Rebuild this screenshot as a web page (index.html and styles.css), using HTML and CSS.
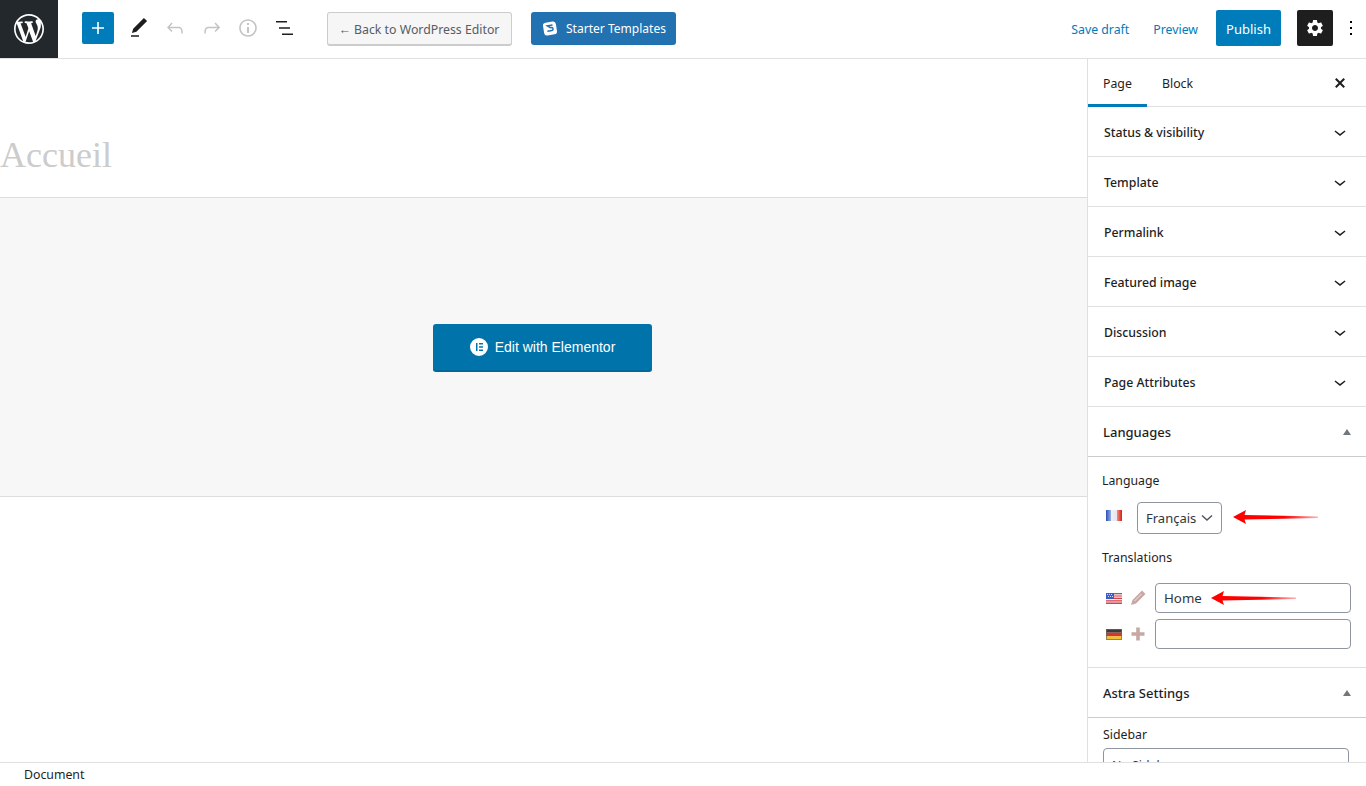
FILE: index.html
```html
<!DOCTYPE html>
<html lang="en">
<head>
<meta charset="utf-8">
<title>Accueil</title>
<link rel="stylesheet" href="styles.css">
</head>
<body>
<div class="app">
  <header class="topbar">
    <a class="wp-logo"><svg viewBox="0 0 20 20" width="30" height="30"><path fill="#fff" d="M20 10c0-5.510-4.490-10-10-10C4.480 0 0 4.490 0 10c0 5.520 4.480 10 10 10 5.510 0 10-4.480 10-10zM7.780 15.370L4.370 6.220c.55-.02 1.170-.08 1.170-.08.5-.06.44-1.130-.06-1.110 0 0-1.450.11-2.370.11-.18 0-.37 0-.58-.01C4.120 2.690 6.870 1.110 10 1.110c2.330 0 4.450.87 6.050 2.340-.68-.11-1.650.39-1.650 1.580 0 .74.45 1.360.9 2.100.35.61.55 1.360.55 2.460 0 1.490-1.400 5-1.400 5l-3.030-8.370c.54-.02.82-.17.82-.17.5-.05.44-1.250-.06-1.220 0 0-1.440.12-2.380.12-.87 0-2.330-.12-2.330-.12-.5-.03-.56 1.200-.06 1.220l.92.08 1.260 3.410zM17.410 10c.24-.64.74-1.870.43-4.250.7 1.290 1.050 2.710 1.050 4.250 0 3.290-1.730 6.240-4.400 7.780.97-2.590 1.940-5.200 2.920-7.780zM6.100 18.090C3.120 16.650 1.110 13.530 1.110 10c0-1.300.23-2.480.72-3.590C3.250 10.300 4.670 14.200 6.100 18.090zm4.030-6.630l2.580 6.980c-.86.29-1.760.45-2.710.45-.79 0-1.570-.11-2.290-.33.81-2.380 1.620-4.740 2.420-7.100z"/></svg></a>
    <div class="tools">
      <button class="add"><svg viewBox="0 0 24 24" width="24" height="24"><path fill="#fff" d="M18 11.200h-5.200V6h-1.600v5.200H6v1.600h5.200V18h1.600v-5.200H18z"/></svg></button>
      <span class="tool dark"><svg viewBox="0 0 24 24" width="24" height="24"><path d="M20.100 5.100L16.900 2 6.200 12.700l-1.300 4.400 4.500-1.300L20.100 5.100zM4 20.800h8v-1.500H4v1.500z"/></svg></span>
      <span class="tool muted"><svg viewBox="0 0 24 24" width="24" height="24"><path d="M18.300 11.700c-.6-.6-1.400-.9-2.300-.9H6.700l2.900-3.300-1.100-1-4.500 5L8.500 16l1-1-2.700-2.700H16c.5 0 .9.2 1.300.5 1 1 1 3.400 1 4.500v.3h1.500v-.2c0-1.500 0-4.300-1.500-5.700z"/></svg></span>
      <span class="tool muted"><svg viewBox="0 0 24 24" width="24" height="24"><path d="M15.600 6.500l-1.100 1 2.900 3.300H8c-.9 0-1.700.3-2.300.9-1.400 1.500-1.400 4.200-1.400 5.600v.2h1.500v-.3c0-1.100 0-3.500 1-4.500.3-.3.7-.5 1.300-.5h9.200L14.500 15l1.100 1.100 4.600-4.600-4.600-5z"/></svg></span>
      <span class="tool muted"><svg viewBox="0 0 24 24" width="24" height="24"><path d="M12 3.200c-4.800 0-8.800 3.900-8.800 8.800 0 4.800 3.900 8.800 8.800 8.800 4.800 0 8.800-3.900 8.800-8.800 0-4.800-4-8.800-8.800-8.800zm0 16c-4 0-7.200-3.300-7.200-7.200C4.800 8 8 4.800 12 4.800s7.200 3.300 7.200 7.200c0 4-3.200 7.200-7.200 7.200zM11 17h2v-6h-2v6zm0-8h2V7h-2v2z"/></svg></span>
      <span class="tool dark"><svg viewBox="0 0 24 24" width="24" height="24"><path d="M3 5h11v1.500H3zM6 11.200h11v1.500H6zM9 17.400h11v1.500H9z"/></svg></span>
    </div>
    <a class="back-btn">← Back to WordPress Editor</a>
    <a class="starter-btn"><svg viewBox="0 0 16 17" width="16" height="17"><rect x="1.500" y="2" width="13" height="13" rx="3" fill="#fff" transform="rotate(-9 8 8.500)"/><path d="M11 5.500H5.800l2.800 2.300H10c1.300 0 1.300 3-.4 3H5" fill="none" stroke="#2271b1" stroke-width="1.500" transform="rotate(-9 8 8.500)"/></svg>Starter Templates</a>
    <div class="actions">
      <a class="link save">Save draft</a>
      <a class="link preview">Preview</a>
      <button class="publish">Publish</button>
      <button class="settings"><svg viewBox="0 0 20 20" width="20" height="20"><path fill="#fff" d="M15.950 10.780c.03-.25.05-.51.05-.78s-.02-.53-.06-.78l1.690-1.320c.15-.12.19-.34.1-.51l-1.600-2.770c-.1-.18-.31-.24-.49-.18l-1.990.8c-.42-.32-.86-.58-1.350-.78L12 2.340c-.03-.2-.2-.34-.4-.34H8.400c-.2 0-.36.14-.39.34l-.3 2.120c-.49.2-.94.47-1.350.78l-1.990-.8c-.18-.07-.39 0-.49.18l-1.600 2.770c-.1.18-.06.39.1.51l1.690 1.320c-.04.25-.07.52-.07.78s.02.53.06.78L2.370 12.100c-.15.12-.19.34-.1.51l1.600 2.770c.1.18.31.24.49.18l1.990-.8c.42.32.86.58 1.350.78l.3 2.120c.04.2.2.34.4.34h3.200c.2 0 .37-.14.39-.34l.3-2.120c.49-.2.94-.47 1.350-.78l1.990.8c.18.07.39 0 .49-.18l1.600-2.770c.1-.18.06-.39-.1-.51l-1.670-1.320zM10 13c-1.650 0-3-1.350-3-3s1.350-3 3-3 3 1.350 3 3-1.350 3-3 3z"/></svg></button>
      <span class="more"><svg viewBox="0 0 24 24" width="24" height="24"><path d="M13 19h-2v-2h2v2zm0-6h-2v-2h2v2zm0-6h-2V5h2v2z"/></svg></span>
    </div>
  </header>

  <div class="body">
    <main class="editor">
      <h1 class="title">Accueil</h1>
      <div class="builder">
        <a class="elementor-btn"><svg viewBox="0 0 18 18" width="18" height="18"><path fill="#fff" fill-rule="evenodd" d="M9 0a9 9 0 1 0 0 18A9 9 0 0 0 9 0zM6 5h1.500v8H6zm3 0h4v1.500H9zm0 3.250h4v1.500H9zm0 3.250h4V13H9z"/></svg>Edit with Elementor</a>
      </div>
    </main>

    <aside class="sidebar">
      <div class="tabs">
        <span class="tab active">Page</span>
        <span class="tab">Block</span>
        <svg class="close" viewBox="0 0 20 20" width="20" height="20"><path d="M14.950 6.460L11.410 10l3.540 3.540-1.410 1.410L10 11.420l-3.530 3.530-1.420-1.420L8.580 10 5.050 6.470l1.420-1.420L10 8.580l3.540-3.530z"/></svg>
      </div>
      <div class="row"><span class="row-label">Status &amp; visibility</span><svg class="chev" viewBox="0 0 24 24" width="24" height="24"><path d="M17.500 11.600L12 16l-5.500-4.400.9-1.200L12 14l4.600-3.600z"/></svg></div>
      <div class="row"><span class="row-label">Template</span><svg class="chev" viewBox="0 0 24 24" width="24" height="24"><path d="M17.500 11.600L12 16l-5.500-4.400.9-1.200L12 14l4.600-3.600z"/></svg></div>
      <div class="row"><span class="row-label">Permalink</span><svg class="chev" viewBox="0 0 24 24" width="24" height="24"><path d="M17.500 11.600L12 16l-5.500-4.400.9-1.200L12 14l4.600-3.600z"/></svg></div>
      <div class="row"><span class="row-label">Featured image</span><svg class="chev" viewBox="0 0 24 24" width="24" height="24"><path d="M17.500 11.600L12 16l-5.500-4.400.9-1.200L12 14l4.600-3.600z"/></svg></div>
      <div class="row"><span class="row-label">Discussion</span><svg class="chev" viewBox="0 0 24 24" width="24" height="24"><path d="M17.500 11.600L12 16l-5.500-4.400.9-1.200L12 14l4.600-3.600z"/></svg></div>
      <div class="row"><span class="row-label">Page Attributes</span><svg class="chev" viewBox="0 0 24 24" width="24" height="24"><path d="M17.500 11.600L12 16l-5.500-4.400.9-1.200L12 14l4.600-3.600z"/></svg></div>

      <div class="meta-head">Languages<span class="tri"></span></div>
      <div class="lang">
        <div class="lbl">Language</div>
        <div class="lang-line">
          <svg class="flag flag-fr" viewBox="0 0 16 11" width="16" height="11"><defs><linearGradient id="fr"><stop offset="0" stop-color="#2a50b5"/><stop offset=".33" stop-color="#9fb4e8"/><stop offset=".34" stop-color="#eef1f8"/><stop offset=".66" stop-color="#e6e6ec"/><stop offset=".67" stop-color="#f2948a"/><stop offset="1" stop-color="#d81e12"/></linearGradient></defs><rect width="16" height="11" fill="url(#fr)"/></svg>
          <div class="select">Français<svg viewBox="0 0 12 8" width="12" height="8"><path d="M1 1.500l5 4.500 5-4.500" fill="none" stroke="#50575e" stroke-width="1.500"/></svg></div>
          <svg class="arrow arrow-a" viewBox="0 0 85 14" width="85" height="14"><defs><linearGradient id="ar"><stop offset=".6" stop-color="#f00"/><stop offset="1" stop-color="#f00" stop-opacity=".3"/></linearGradient></defs><path fill="url(#ar)" d="M0 7L13 0 11.500 5 85 6.500v1.500L11.500 9.500 13 14z"/></svg>
        </div>
        <div class="lbl trans">Translations</div>
        <div class="trans-line">
          <svg class="flag" viewBox="0 0 16 11" width="16" height="11"><rect width="16" height="11" fill="#f0ecec"/><path fill="#d8434a" d="M0 0h16v1.200H0zM0 2.400h16v1.200H0zM0 4.800h16V6H0zM0 7.200h16v1.200H0zM0 9.600h16V11H0z"/><rect width="8" height="6" fill="#3a5ed0"/><path fill="#cfdaf8" d="M1 1h1v1H1zM3 1h1v1H3zM5 1h1v1H5zM2 3h1v1H2zM4 3h1v1H4zM6 3h1v1H6z"/></svg>
          <svg class="act" viewBox="0 0 16 16" width="16" height="16"><path fill="#c8a8a4" d="M12 .5l3.500 3.500L6 13.500 1 15l1.500-5z"/><path d="M4.500 11l7-7" stroke="#fff" stroke-width=".7" fill="none"/></svg>
          <div class="field">Home</div>
          <svg class="arrow arrow-b" viewBox="0 0 85 14" width="85" height="14"><path fill="url(#ar)" d="M0 7L13 0 11.500 5 85 6.500v1.500L11.500 9.500 13 14z"/></svg>
        </div>
        <div class="trans-line">
          <svg class="flag" viewBox="0 0 16 11" width="16" height="11"><rect width="16" height="3.700" fill="#3a3a3a"/><rect y="3.700" width="16" height="3.700" fill="#d5352c"/><rect y="7.300" width="16" height="3.700" fill="#f2c22e"/><rect x=".5" y=".5" width="15" height="10" fill="none" stroke="#6b6b5e" stroke-opacity=".7"/></svg>
          <svg class="act" viewBox="0 0 16 16" width="16" height="16"><path fill="#c8a8a4" d="M6.200 1.500h3.600v4.700h4.700v3.600H9.800v4.700H6.200V9.800H1.500V6.200h4.700z"/></svg>
          <div class="field"></div>
        </div>
      </div>

      <div class="meta-head astra">Astra Settings<span class="tri"></span></div>
      <div class="astra-body">
        <div class="lbl">Sidebar</div>
        <div class="astra-select">No Sidebar</div>
      </div>
    </aside>
  </div>

  <footer class="footer">Document</footer>
</div>
</body>
</html>
```

FILE: styles.css
```css
* { box-sizing: border-box; }
html, body { margin: 0; height: 100%; overflow: hidden; }
body { font-family: "Noto Sans", sans-serif; font-size: 12.3px; color: #1e1e1e; background: #fff; }
.app { display: flex; flex-direction: column; height: 786px; }

.topbar { flex: 0 0 59px; display: flex; align-items: center; padding-bottom: 2px; border-bottom: 1px solid #e0e0e0; }
.wp-logo { width: 58px; height: 58px; margin-bottom: -2px; align-self: flex-start; background: #23282d; display: flex; align-items: center; justify-content: center; }
.tools { display: flex; align-items: center; margin-left: 24px; }
.add { width: 32px; height: 32px; padding: 0; border: 0; border-radius: 2px; background: #007cba; display: flex; align-items: center; justify-content: center; }
.tool { width: 24px; height: 24px; margin-left: 12.5px; display: block; }
.dark svg { fill: #1e1e1e; }
.muted svg { fill: #c4c4c4; }
.back-btn { margin: 2px 0 0 30px; height: 34px; width: 185px; padding-top: 1px; display: flex; align-items: center; justify-content: center; border: 1px solid #ccc; border-bottom-width: 2px; border-radius: 3px; background: #f6f6f6; color: #555d66; white-space: nowrap; }
.starter-btn { margin: 1px 0 0 19px; height: 33px; width: 145px; padding-left: 2px; display: flex; align-items: center; justify-content: center; gap: 8px; border-radius: 3px; background: #2271b1; color: #fff; white-space: nowrap; font-size: 12.05px; }
.actions { margin-left: auto; display: flex; align-items: center; }
.link { color: #007cba; margin-top: 2px; }
.save { margin-right: 24px; }
.preview { margin-right: 18px; }
.publish { width: 65px; height: 36px; padding: 2px 0 0; border: 0; border-radius: 2px; background: #007cba; color: #fff; font: inherit; font-size: 13px; }
.settings { width: 36px; height: 36px; margin-left: 16px; padding: 0; border: 0; border-radius: 2px; background: #1e1e1e; display: flex; align-items: center; justify-content: center; }
.more { width: 24px; height: 24px; margin: 0 3px 0 6px; display: block; }

.body { flex: 1; display: flex; min-height: 0; }
.editor { flex: 1; min-width: 0; }
.title { margin: 0; height: 139px; padding-top: 74px; font: 400 36px/44px "Liberation Serif", serif; color: #ccc; border-bottom: 1px solid #ddd; }
.builder { height: 299px; background: #f7f7f7; border-bottom: 1px solid #ddd; display: flex; align-items: center; justify-content: center; }
.elementor-btn { width: 219px; height: 48px; margin: 1px 2px 0 0; display: flex; align-items: center; justify-content: center; gap: 7px; background: #0073aa; border-bottom: 2px solid #006799; border-radius: 3px; color: #fff; font: 14px "Liberation Sans", sans-serif; }

.sidebar { flex: 0 0 279px; border-left: 1px solid #e0e0e0; overflow: hidden; position: relative; }
.tabs { height: 48px; display: flex; align-items: stretch; border-bottom: 1px solid #e0e0e0; position: relative; }
.tab { padding: 0 15px; line-height: 50px; }
.tab.active { width: 59px; border-bottom: 3px solid #007cba; height: 48px; margin-bottom: -1px; }
.close { margin: 14px 16px 0 auto; fill: #1e1e1e; }
.row { height: 50px; padding: 0 14px 0 16px; display: flex; align-items: center; justify-content: space-between; border-bottom: 1px solid #e0e0e0; font-weight: 500; }
.row-label { margin-top: 1px; }
.chev { fill: #1e1e1e; }
.meta-head { height: 50px; padding: 0 14px 0 15px; display: flex; align-items: center; justify-content: space-between; border-bottom: 1px solid #ccc; font-weight: 500; font-size: 13px; }
.tri { width: 0; height: 0; border: 4.5px solid transparent; border-top: 0; border-bottom: 6px solid #72777c; margin-right: 1px; }

.lang { height: 211px; padding: 15px 15px 0 14px; border-bottom: 1px solid #e0e0e0; }
.lbl { line-height: 18px; }
.lang-line { display: flex; align-items: center; margin-top: 12px; position: relative; }
.flag { flex: none; margin-left: 4px; }
.flag-fr { margin-top: -5px; }
.select { margin-left: 15px; width: 85px; height: 32px; padding: 0 8px 0 8px; display: flex; align-items: center; justify-content: space-between; border: 1px solid #8d96a0; border-radius: 4px; color: #32373c; font-size: 13px; }
.trans { margin-top: 15px; }
.trans-line { display: flex; align-items: center; margin-top: 6px; position: relative; }
.lbl.trans + .trans-line { margin-top: 16px; }
.act { flex: none; margin-left: 8px; }
.field { margin-left: 9px; width: 196px; height: 30px; padding: 0 8px; display: flex; align-items: center; border: 1px solid #8d96a0; border-radius: 4px; color: #32373c; font-size: 13.3px; }
.arrow { position: absolute; }
.arrow-a { left: 131px; top: 8px; }
.arrow-b { left: 109px; top: 8px; }

.astra { border-bottom: 1px solid #ccc; }
.astra-body { padding: 8px 17px 0 15px; }
.astra-select { margin-top: 4px; height: 40px; padding: 8px 8px; border: 1px solid #8d96a0; border-radius: 4px; color: #32373c; }

.footer { flex: 0 0 24px; padding: 1px 0 0 24px; line-height: 22px; background: #fff; border-top: 1px solid #e0e0e0; position: relative; }
```
